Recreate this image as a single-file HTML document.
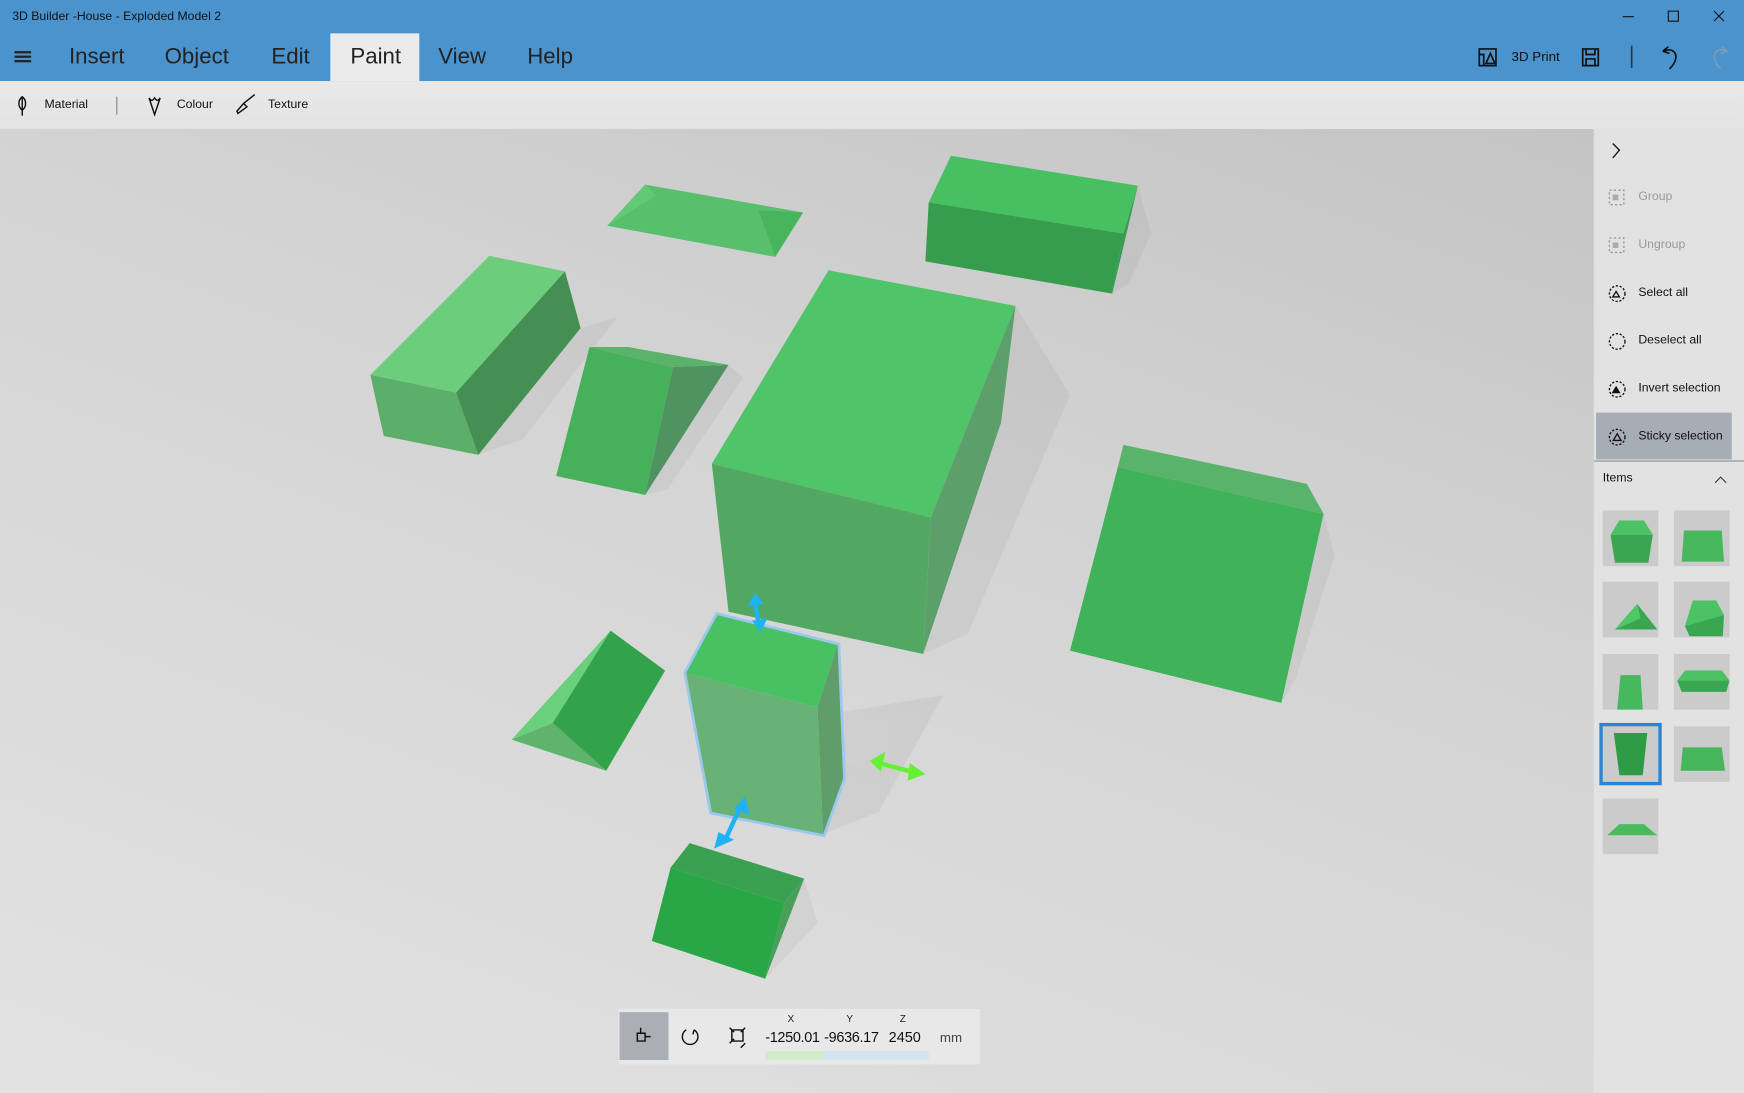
<!DOCTYPE html>
<html><head><meta charset="utf-8"><style>
html,body{margin:0;padding:0;width:1744px;height:1093px;overflow:hidden;background:#e2e2e2}
#w{position:absolute;left:0;top:0;width:1568px;height:983px;transform:scale(1.11224);transform-origin:0 0;font-family:"Segoe UI","Liberation Sans",sans-serif;}
.title{position:absolute;left:0;top:0;width:1568px;height:73px;background:#4a93cd}
.t{position:absolute;font-size:11px;color:#111;left:11px;top:9px}
.menu{position:absolute;top:40px;font-size:20px;color:#222;font-weight:300}
.tab{position:absolute;left:297px;top:30px;width:80px;height:43px;background:#ebebeb}
.tb{position:absolute;left:0;top:73px;width:1568px;height:43px;background:linear-gradient(#e9e9e9,#e3e3e3)}
.tbt{position:absolute;top:88px;font-size:11px;color:#111}
.vp{position:absolute;left:0;top:116px;width:1433px;height:867px;background:linear-gradient(200deg,#c4c4c4 0%,#d4d4d4 40%,#e2e2e2 100%)}
.rp{position:absolute;left:1433px;top:116px;width:135px;height:867px;background:#e2e2e2}
.th{position:absolute;width:50px;height:50px;background:#cbcbcb}
</style></head><body><div id="w">
<div class="title"></div>
<div class="t">3D Builder -House - Exploded Model 2</div>
<div style="position:absolute;left:13px;top:46px;width:15px;height:2px;background:#222;box-shadow:0 4px 0 #222,0 8px 0 #222"></div>
<div class="tab"></div>
<div class="menu" style="left:62px">Insert</div>
<div class="menu" style="left:148px">Object</div>
<div class="menu" style="left:244px">Edit</div>
<div class="menu" style="left:315px">Paint</div>
<div class="menu" style="left:394px">View</div>
<div class="menu" style="left:474px">Help</div>
<svg style="position:absolute;left:1450px;top:5px" width="110" height="20" fill="none" stroke="#111" stroke-width="1"><path d="M9 10h10M50 5h9v9h-9zM91 5l9 9M100 5l-9 9"/></svg>
<svg style="position:absolute;left:1325px;top:38px" width="240" height="26" fill="none" stroke="#111" stroke-width="1.5"><path d="M5 6h15v15H5zM5 11h4v10M11 19l4-9 4 9z"/><path d="M98 6h14v15H98zM101 6v5h8V6M101 21v-6h8v6"/><path d="M142 3v20" stroke="#333"/><path d="M170 8l5-4M170 8l6 2M171 8c6-3 13 0 10 9-1 3-3 5-5 7"/><path d="M228 8l-5-4M228 8l-6 2M227 8c-6-3-13 0-10 9 1 3 3 5 5 7" stroke="#7a9cb8"/></svg>
<div style="position:absolute;left:1359px;top:44px;font-size:12px;color:#111">3D Print</div>
<div class="tb"></div>
<svg style="position:absolute;left:10px;top:84px" width="270" height="22" fill="none" stroke="#111" stroke-width="1.3"><path d="M10 3c-4 3-4 9 0 12c4-3 4-9 0-12zM10 3v17"/><path d="M95 3v16" stroke="#999"/><path d="M124 4l5 15 5-15M124 4c2 3 3 3 5 0 2 3 3 3 5 0"/><path d="M204 18l8-6-3-3-6 7zM209 9l10-8"/></svg>
<div class="tbt" style="left:40px">Material</div>
<div class="tbt" style="left:159px">Colour</div>
<div class="tbt" style="left:241px">Texture</div>
<div class="vp"></div>
<svg style="position:absolute;left:0;top:0" width="1433" height="983">
<g fill="#000" opacity="0.04">
<polygon points="430,409 522,295 555,285 470,395"/>
<polygon points="580,445 655,328 668,340 600,440"/>
<polygon points="830,588 913,275 962,355 870,570"/>
<polygon points="1000,264 1023,167 1035,210 1015,255"/>
<polygon points="740,750 758,640 848,625 790,730"/>
<polygon points="1152,632 1190,462 1200,500 1165,610"/>
<polygon points="688,880 723,790 735,830"/>
</g>
<polygon points="546,203 580,166 722,191 697,231" fill="#58bf6c"/>
<polygon points="546,203 580,166 590,176" fill="#62ca74"/>
<polygon points="697,231 722,191 682,189" fill="#48b55c"/>
<polygon points="835,182 855,140 1023,167 1010,210" fill="#47c062"/>
<polygon points="835,182 1010,210 1000,264 832,235" fill="#359d4d"/>
<polygon points="1010,210 1023,167 1000,264" fill="#3a9a50"/>
<polygon points="333,337 440,230 508,244 410,353" fill="#6ccd7c"/>
<polygon points="333,337 410,353 430,409 345,392" fill="#5caf6b"/>
<polygon points="410,353 508,244 522,295 430,409" fill="#458f53"/>
<polygon points="530,312 565,312 655,328 605,330" fill="#5ab26b"/>
<polygon points="530,312 605,330 580,445 500,428" fill="#47b05b"/>
<polygon points="605,330 655,328 580,445" fill="#4f9460"/>
<polygon points="640,417 745,243 913,275 837,465" fill="#4fc468"/>
<polygon points="640,417 837,465 830,588 655,550" fill="#52a862"/>
<polygon points="837,465 913,275 900,380 830,588" fill="#5d9f6a"/>
<polygon points="1010,400 1175,435 1190,462 1005,420" fill="#5ab36b"/>
<polygon points="1005,420 1190,462 1152,632 962,585" fill="#40b25a"/>
<polygon points="460,665 549,567 497,650" fill="#6ad07c"/>
<polygon points="460,665 497,650 545,693" fill="#5fb36d"/>
<polygon points="497,650 549,567 598,603 545,693" fill="#33a34b"/>
<polygon points="617,605 645,553 753,580 758,700 740,750 640,730" fill="none" stroke="#9cc8ee" stroke-width="5"/>
<polygon points="617,605 645,553 753,580 735,636" fill="#47c162"/>
<polygon points="617,605 735,636 740,750 640,730" fill="#68b276"/>
<polygon points="735,636 753,580 758,700 740,750" fill="#5f9d6b"/>
<polygon points="603,780 620,758 723,790 705,812" fill="#3aa052"/>
<polygon points="603,780 705,812 688,880 586,846" fill="#29a646"/>
<polygon points="705,812 723,790 688,880" fill="#489f5a"/>
<g stroke="#1fb3f5" stroke-width="4" fill="#1fb3f5">
<line x1="679" y1="543" x2="682" y2="560"/><polygon points="672,545 679,533 687,543" stroke="none"/><polygon points="676,558 690,556 684,568" stroke="none"/>
<line x1="665" y1="727" x2="653" y2="753"/><polygon points="660,727 670,716 674,733" stroke="none"/><polygon points="646,748 660,755 642,763" stroke="none"/>
</g>
<g stroke="#66f033" stroke-width="4" fill="#66f033">
<line x1="790" y1="686" x2="824" y2="695"/><polygon points="782,684 796,676 792,694" stroke="none"/><polygon points="818,686 832,696 816,702" stroke="none"/>
</g>
</svg>
<div style="position:absolute;left:556px;top:907px;width:325px;height:50px;background:#e8e8e8"></div>
<div style="position:absolute;left:557px;top:910px;width:44px;height:43px;background:#a9afb5"></div>
<svg style="position:absolute;left:560px;top:912px" width="120" height="40" fill="none" stroke="#111" stroke-width="1.3"><path d="M13 17h7v7h-7zM16 17v-5M20 20h5"/><path d="M57 14a7 7 0 1 0 7 0M64 14l-1 4"/><path d="M98 14h10v10H98zM96 12l4 4M110 12l-4 4M96 26l4-4M110 26l-4 4"/></svg>
<div style="position:absolute;left:688px;top:945px;width:52px;height:8px;background:#d2ecc8"></div>
<div style="position:absolute;left:740px;top:945px;width:95px;height:8px;background:#d4e4ec"></div>
<div style="position:absolute;left:708px;top:911px;font-size:9px;color:#222">X</div>
<div style="position:absolute;left:761px;top:911px;font-size:9px;color:#222">Y</div>
<div style="position:absolute;left:809px;top:911px;font-size:9px;color:#222">Z</div>
<div style="position:absolute;left:688px;top:925px;font-size:13px;color:#111;letter-spacing:-0.3px">-1250.01</div>
<div style="position:absolute;left:741px;top:925px;font-size:13px;color:#111;letter-spacing:-0.3px">-9636.17</div>
<div style="position:absolute;left:799px;top:925px;font-size:13px;color:#111">2450</div>
<div style="position:absolute;left:845px;top:926px;font-size:12px;color:#444">mm</div>
<div class="rp"></div>
<div style="position:absolute;left:1435px;top:371px;width:122px;height:42px;background:#a6adb4"></div>
<div style="position:absolute;left:1433px;top:414px;width:135px;height:1px;background:#8a8f95"></div>
<svg style="position:absolute;left:1440px;top:125px" width="30" height="300" fill="none" stroke="#111" stroke-width="1.2"><path d="M10 4l6 6-6 7"/><rect x="7" y="46" width="13" height="13" stroke="#999" stroke-dasharray="2 2"/><rect x="10" y="50" width="5" height="5" fill="#aaa" stroke="none"/><rect x="7" y="89" width="13" height="13" stroke="#999" stroke-dasharray="2 2"/><rect x="10" y="93" width="5" height="5" fill="#aaa" stroke="none"/><circle cx="14" cy="139" r="7" stroke-dasharray="2 1.5"/><path d="M10 142l3-5 3 5z"/><circle cx="14" cy="182" r="7" stroke-dasharray="2 1.5"/><circle cx="14" cy="225" r="7" stroke-dasharray="2 1.5"/><path d="M10 228l3-5 3 5z" fill="#111"/><circle cx="14" cy="268" r="7" stroke-dasharray="2 1.5"/><path d="M10.5 271l3.5-6 3.5 6z"/></svg>
<div style="position:absolute;left:1473px;top:171px;font-size:11px;color:#999">Group</div>
<div style="position:absolute;left:1473px;top:214px;font-size:11px;color:#999">Ungroup</div>
<div style="position:absolute;left:1473px;top:257px;font-size:11px;color:#111">Select all</div>
<div style="position:absolute;left:1473px;top:300px;font-size:11px;color:#111">Deselect all</div>
<div style="position:absolute;left:1473px;top:343px;font-size:11px;color:#111">Invert selection</div>
<div style="position:absolute;left:1473px;top:386px;font-size:11px;color:#111">Sticky selection</div>
<div style="position:absolute;left:1441px;top:424px;font-size:11px;color:#111">Items</div>
<svg style="position:absolute;left:1540px;top:426px" width="14" height="10" fill="none" stroke="#333"><path d="M2 8l5-5 5 5"/></svg>
<div class="th" style="left:1441px;top:459px"></div><div class="th" style="left:1505px;top:459px"></div>
<div class="th" style="left:1441px;top:523px"></div><div class="th" style="left:1505px;top:523px"></div>
<div class="th" style="left:1441px;top:588px"></div><div class="th" style="left:1505px;top:588px"></div>
<div style="position:absolute;left:1438px;top:650px;width:50px;height:50px;border:3px solid #2a86d4;background:#cbcbcb"></div><div class="th" style="left:1505px;top:653px"></div>
<div class="th" style="left:1441px;top:718px"></div>
<svg style="position:absolute;left:0;top:0" width="1568" height="983">
<polygon points="1448,481 1456,468 1478,468 1486,481 1482,506 1452,506" fill="#3aa651"/><polygon points="1448,481 1456,468 1478,468 1486,481" fill="#4cc264"/>
<polygon points="1514,477 1548,477 1550,505 1512,505" fill="#48b85e"/>
<polygon points="1452,566 1472,543 1490,566" fill="#3aa651"/><polygon points="1452,566 1472,543 1475,556" fill="#50c868"/>
<polygon points="1515,563 1522,540 1543,540 1550,553 1549,572 1519,572" fill="#3aa651"/><polygon points="1515,563 1522,540 1543,540 1550,553" fill="#4cc264"/>
<polygon points="1457,607 1475,607 1477,638 1454,638" fill="#46b85d"/>
<polygon points="1508,612 1515,603 1548,603 1555,612 1552,622 1512,622" fill="#3aa651"/><polygon points="1508,612 1515,603 1548,603 1555,612" fill="#4cc264"/>
<polygon points="1451,659 1481,659 1477,697 1456,697" fill="#2f9b47"/>
<polygon points="1513,672 1548,672 1551,693 1511,693" fill="#45b65c"/>
<polygon points="1445,751 1456,741 1478,741 1490,751" fill="#48bb5f"/>
</svg>
</div></body></html>
